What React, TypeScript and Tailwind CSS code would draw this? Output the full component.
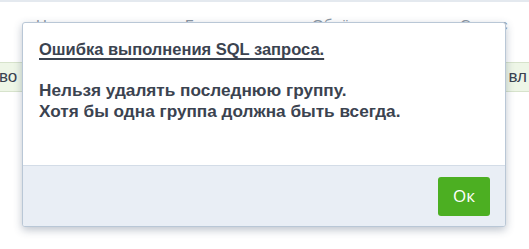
import React from "react";

export default function App() {
  return (
    <div className="relative w-[529px] h-[249px] overflow-hidden bg-white font-['Liberation_Sans',Arial,sans-serif]">
      <div className="h-[2px] bg-[#e4e9ef]" />
      <div className="flex h-[60px] pt-[13px] text-[15px] leading-[20px] text-[#8c97a3]">
        <div className="w-[36px]" />
        <div className="w-[149px]">Название</div>
        <div className="w-[127px]">Бренд</div>
        <div className="w-[148px]">Объём</div>
        <div>Статус</div>
      </div>
      <div className="flex h-[30px] items-center justify-between border-y border-[#d7e3cc] bg-[#eef6e7] text-[17px] text-[#3a4250]">
        <span className="-ml-[1px]">во</span>
        <span className="mr-[2px]">вл</span>
      </div>

      <div className="absolute left-[22px] top-[22px] flex h-[205px] w-[484px] flex-col overflow-hidden rounded-[3px] border border-[#b9c7d6] bg-white shadow-[0_3px_8px_rgba(40,60,90,0.3)]">
        <div className="flex-1 px-[16px] pt-[16px] font-bold text-[#3b4350]">
          <div className="text-[16.5px] leading-[21px] underline decoration-[1.5px] underline-offset-[3px]">
            Ошибка выполнения SQL запроса.
          </div>
          <div className="mt-[20px] text-[17.2px] leading-[21px]">
            Нельзя удалять последнюю группу.
            <br />
            Хотя бы одна группа должна быть всегда.
          </div>
        </div>
        <div className="flex h-[61px] items-center justify-end border-t border-[#d3dce7] bg-[#e9eef5] pr-[15px]">
          <button className="flex h-[39px] w-[52px] items-center justify-center rounded-[3px] bg-[#4caf22] font-['Open_Sans',sans-serif] text-[17px] text-white">
            Ок
          </button>
        </div>
      </div>
    </div>
  );
}
